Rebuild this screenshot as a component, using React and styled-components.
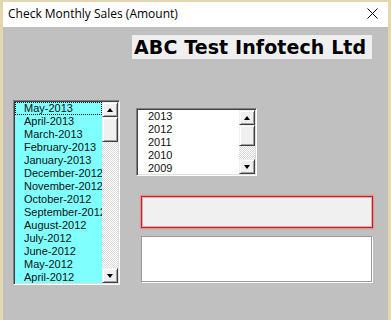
import styled, { createGlobalStyle } from 'styled-components';

const GlobalStyle = createGlobalStyle`
  html, body {
    margin: 0;
    padding: 0;
    width: 391px;
    height: 320px;
    overflow: hidden;
    background: #c0c0c0;
  }
`;

const months = [
  'May-2013',
  'April-2013',
  'March-2013',
  'February-2013',
  'January-2013',
  'December-2012',
  'November-2012',
  'October-2012',
  'September-2012',
  'August-2012',
  'July-2012',
  'June-2012',
  'May-2012',
  'April-2012',
];

const years = ['2013', '2012', '2011', '2010', '2009'];

const Window = styled.div`
  display: flex;
  flex-direction: column;
  width: 391px;
  height: 320px;
  box-sizing: border-box;
  padding: 2px 3px 0 3px;
  background: #e4d6ad;
`;

const TitleBar = styled.div`
  display: flex;
  align-items: center;
  justify-content: space-between;
  height: 25px;
  padding: 0 10px 0 5px;
  background: #ffffff;
  font-family: 'Open Sans', 'Noto Sans', sans-serif;
  font-size: 12px;
  color: #000;
`;

const TitleText = styled.span`
  line-height: 25px;
  padding-bottom: 3px;
`;

const CloseIcon = styled.svg`
  width: 11px;
  height: 11px;
  margin-bottom: 3px;
`;

const Body = styled.div`
  flex: 1;
  display: flex;
  flex-direction: column;
  padding-top: 8px;
  background: #c0c0c0;
`;

const Header = styled.div`
  align-self: flex-start;
  margin-left: 129px;
  width: 240px;
  height: 24px;
  box-sizing: border-box;
  padding-left: 2px;
  background: #efefef;
  font-family: 'DejaVu Sans', Verdana, sans-serif;
  font-weight: 700;
  font-size: 19px;
  letter-spacing: 0.1px;
  line-height: 25px;
  color: #000;
  white-space: nowrap;
`;

const MainRow = styled.div`
  display: flex;
  align-items: flex-start;
  margin-top: 41px;
`;

const RightColumn = styled.div`
  display: flex;
  flex-direction: column;
  margin-left: 16px;
  padding-top: 8px;
`;

const ListBox = styled.div`
  display: flex;
  width: ${({ $width }) => $width}px;
  height: ${({ $height }) => $height}px;
  margin-left: ${({ $left }) => $left || 0}px;
  box-sizing: border-box;
  border-top: 1px solid #808080;
  border-left: 1px solid #808080;
  border-bottom: 1px solid #ffffff;
  border-right: 1px solid #ffffff;
  box-shadow: inset 1px 1px 0 #404040, inset -1px -1px 0 #dfdfdf;
  padding: 1px;
  background: ${({ $bg }) => $bg};
`;

const Items = styled.div`
  flex: 1;
  min-width: 0;
  overflow: hidden;
  font-family: 'Liberation Sans', Arial, sans-serif;
  font-size: 11px;
  color: #101010;
`;

const Item = styled.div`
  height: 13px;
  line-height: 13px;
  padding-left: ${({ $indent }) => $indent}px;
  white-space: nowrap;
  overflow: hidden;
  outline: ${({ $focused }) => ($focused ? '1px dotted #000' : 'none')};
  outline-offset: -1px;
`;

const ScrollBar = styled.div`
  display: flex;
  flex-direction: column;
  width: 16px;
  flex-shrink: 0;
`;

const ScrollButton = styled.div`
  display: flex;
  align-items: center;
  justify-content: center;
  height: 15px;
  box-sizing: border-box;
  background: #f0f0f0;
  border-top: 1px solid #f0f0f0;
  border-left: 1px solid #f0f0f0;
  border-bottom: 1px solid #404040;
  border-right: 1px solid #404040;
  box-shadow: inset 1px 1px 0 #ffffff, inset -1px -1px 0 #a0a0a0;
`;

const Arrow = styled.div`
  width: 0;
  height: 0;
  border-left: 3.5px solid transparent;
  border-right: 3.5px solid transparent;
  ${({ $down }) =>
    $down ? 'border-top: 4px solid #000;' : 'border-bottom: 4px solid #000;'}
`;

const Thumb = styled(ScrollButton)`
  height: ${({ $size }) => $size}px;
`;

const Track = styled.div`
  flex: 1;
  background: repeating-conic-gradient(#ffffff 0 25%, #d8d8d8 0 50%) 0 0 / 2px 2px;
`;

const RedField = styled.div`
  width: 232px;
  height: 32px;
  margin-top: 20px;
  margin-left: 5px;
  box-sizing: border-box;
  background: #f0f0f0;
  border: 1px solid #c0222a;
  box-shadow: 0 0 1px 1px rgba(232, 130, 130, 0.7), inset 0 0 0 1px rgba(200, 40, 40, 0.35);
`;

const WhiteField = styled.div`
  width: 231px;
  height: 46px;
  margin-top: 8px;
  margin-left: 5px;
  box-sizing: border-box;
  background: #ffffff;
  border: 1px solid #9a9a9a;
  box-shadow: 1px 1px 0 #ffffff;
`;

function List({ items, width, height, left, bg, indent, thumb, focusFirst }) {
  return (
    <ListBox $width={width} $height={height} $left={left} $bg={bg}>
      <Items>
        {items.map((item, i) => (
          <Item key={item} $indent={indent} $focused={focusFirst && i === 0}>
            {item}
          </Item>
        ))}
      </Items>
      <ScrollBar>
        <ScrollButton>
          <Arrow />
        </ScrollButton>
        <Thumb $size={thumb} />
        <Track />
        <ScrollButton>
          <Arrow $down />
        </ScrollButton>
      </ScrollBar>
    </ListBox>
  );
}

export default function App() {
  return (
    <>
      <GlobalStyle />
      <Window>
        <TitleBar>
          <TitleText>Check Monthly Sales (Amount)</TitleText>
          <CloseIcon viewBox="0 0 11 11">
            <path d="M0.5 0.5 L10.5 10.5 M10.5 0.5 L0.5 10.5" stroke="#000" strokeWidth="1" />
          </CloseIcon>
        </TitleBar>
        <Body>
          <Header>ABC Test Infotech Ltd</Header>
          <MainRow>
            <List
              items={months}
              width={107}
              height={185}
              left={10}
              bg="#80ffff"
              indent={9}
              thumb={25}
              focusFirst
            />
            <RightColumn>
              <List
                items={years}
                width={121}
                height={68}
                bg="#ffffff"
                indent={10}
                thumb={21}
              />
              <RedField />
              <WhiteField />
            </RightColumn>
          </MainRow>
        </Body>
      </Window>
    </>
  );
}
